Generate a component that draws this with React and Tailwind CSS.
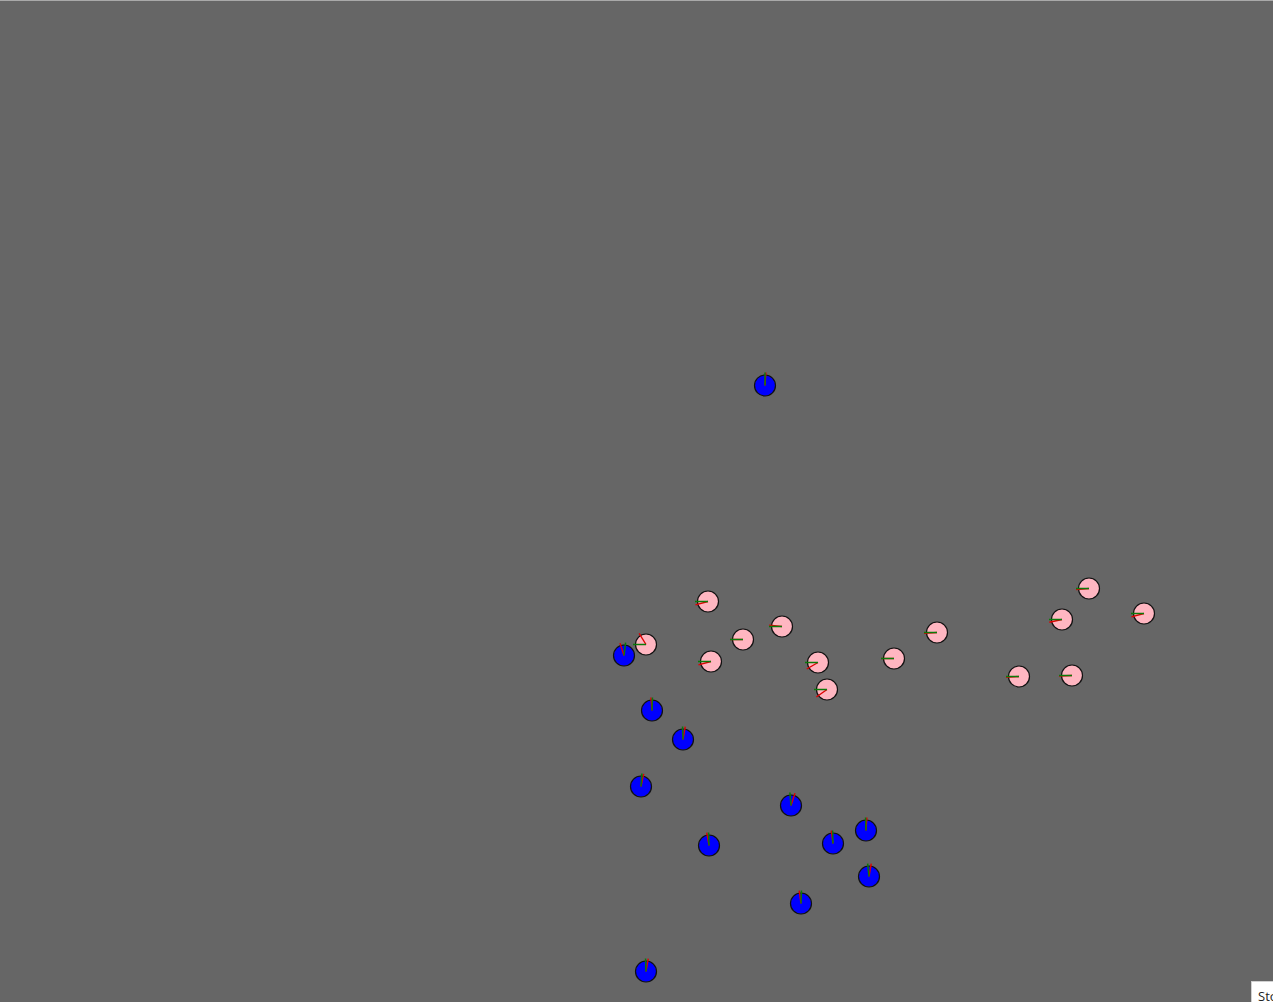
import React from 'react';

// agents: x, y, heading of green line, heading of red line (degrees, y down)
const blues = [
  [765, 385, -90, -86],
  [624, 655, -83, -108],
  [652, 710, -88, -95],
  [683, 739, -92, -80],
  [641, 786, -86, -78],
  [791, 805, -95, -72],
  [709, 845, -92, -100],
  [833, 843, -92, -98],
  [866, 830, -92, -86],
  [869, 876, -96, -80],
  [801, 903, -88, -98],
  [646, 971, -92, -80],
];

const pinks = [
  [708, 601, 180, 165],
  [646, 644, 180, 238],
  [743, 639, 180, 180],
  [711, 661, 180, 165],
  [782, 626, 180, 186],
  [818, 662, 180, 150],
  [827, 689, 180, 145],
  [894, 658, 180, 180],
  [937, 632, 180, 176],
  [1089, 588, 180, 175],
  [1062, 619, 180, 168],
  [1144, 613, 180, 165],
  [1019, 676, 180, 176],
  [1072, 675, 180, 178],
];

function Agent({ x, y, fill, green, red }) {
  const end = (deg, len) => {
    const r = (deg * Math.PI) / 180;
    return [x + Math.cos(r) * len, y + Math.sin(r) * len];
  };
  const [gx, gy] = end(green, 13);
  const [rx, ry] = end(red, 13);
  return (
    <g>
      <circle cx={x} cy={y} r="10.5" fill={fill} stroke="#111" strokeWidth="1.2" />
      <line x1={x} y1={y} x2={rx} y2={ry} stroke="#e00000" strokeWidth="1.4" />
      <line x1={x} y1={y} x2={gx} y2={gy} stroke="#0a7a0a" strokeWidth="1.5" />
    </g>
  );
}

export default function App() {
  return (
    <div className="w-[1273px] h-[1002px] overflow-hidden bg-[#666666] border-t border-[#a9a9a9] flex">
      <svg width="1251" height="1001" className="shrink-0 block">
        {pinks.map(([x, y, g, r], i) => (
          <Agent key={'p' + i} x={x} y={y - 0.5} fill="#ffb6c1" green={g} red={r} />
        ))}
        {blues.map(([x, y, g, r], i) => (
          <Agent key={'b' + i} x={x} y={y - 0.5} fill="#0000ff" green={g} red={r} />
        ))}
      </svg>
      <button className="self-start mt-[980px] h-[30px] pl-[6px] pr-2 bg-white border border-[#d0d0d0] text-[13px] text-[#222] font-['Open_Sans',sans-serif] leading-none whitespace-nowrap shrink-0">
        Stop
      </button>
    </div>
  );
}
